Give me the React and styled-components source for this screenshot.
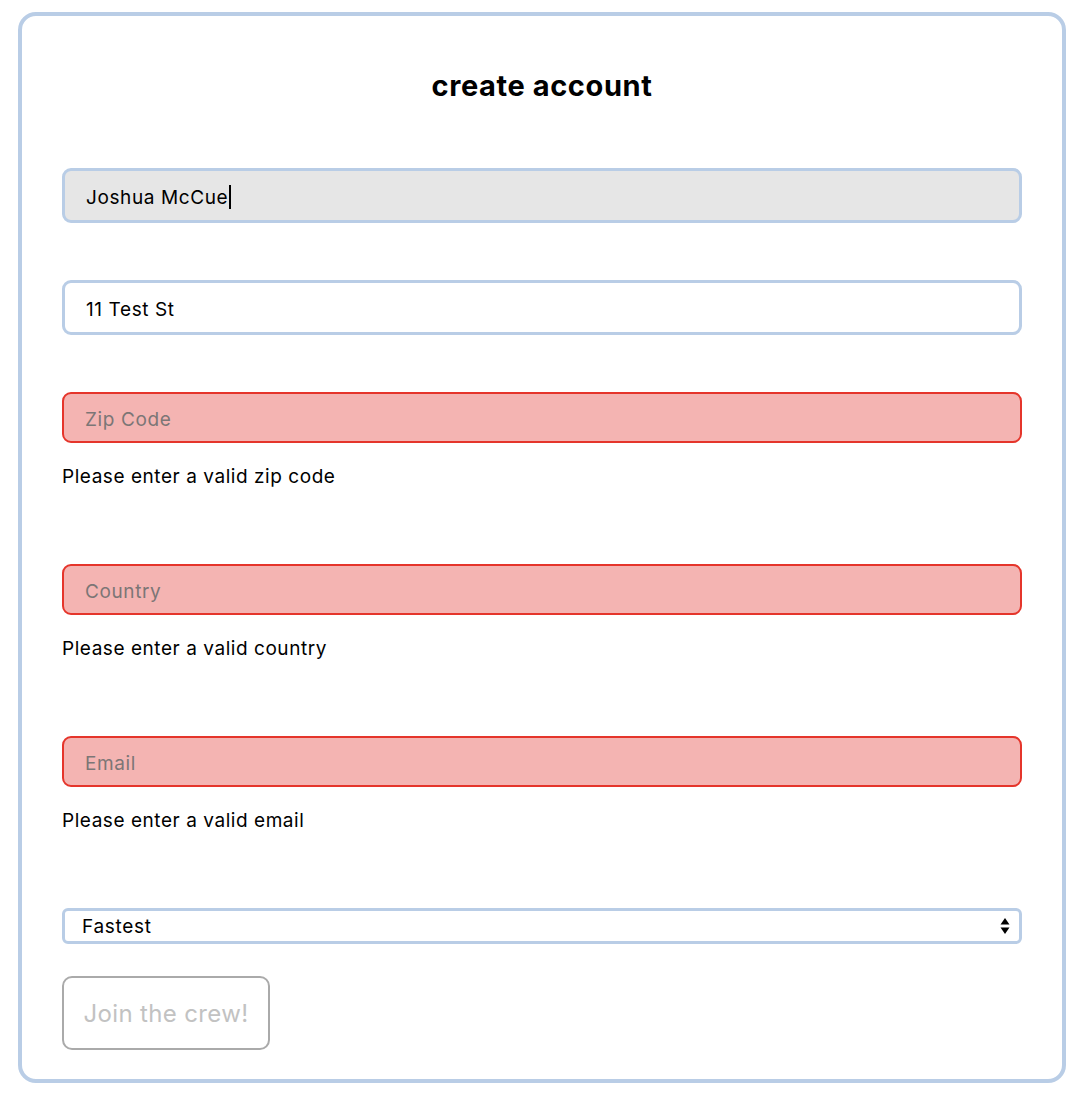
import React from "react";
import styled, { createGlobalStyle } from "styled-components";

const Global = createGlobalStyle`
  html, body { margin: 0; padding: 0; background: #fff; }
  body { font-family: Inter, "Noto Sans", "Liberation Sans", sans-serif; color: #000; }
  * { box-sizing: border-box; }
`;

const Card = styled.form`
  margin: 12px 22px 17px 18px;
  border: 4px solid #b9cde6;
  border-radius: 18px;
  padding: 53px 40px 29px;
  display: flex;
  flex-direction: column;
`;

const Title = styled.h1`
  margin: 0 0 65px;
  font-size: 29px;
  line-height: 34px;
  font-weight: 700;
  text-align: center;
  letter-spacing: 0.6px;
`;

const Field = styled.div`
  display: flex;
  flex-direction: column;
  margin-bottom: ${(p) => (p.$error ? "76px" : "57px")};
`;

const boxBase = `
  width: 100%;
  font-family: Inter, "Noto Sans", "Liberation Sans", sans-serif;
  font-size: 19px;
  letter-spacing: 0.6px;
  outline: none;
  display: flex;
  align-items: center;
`;

const FocusedBox = styled.div`
  ${boxBase}
  height: 55px;
  border: 3px solid #b9cde6;
  border-radius: 9px;
  background: #e6e6e6;
  padding: 3px 21px 0;
  color: #000;
`;

const Caret = styled.span`
  display: inline-block;
  width: 2px;
  height: 24px;
  background: #000;
  margin-left: 1px;
`;

const TextInput = styled.input`
  ${boxBase}
  height: ${(p) => (p.$error ? "51px" : "55px")};
  border: ${(p) => (p.$error ? "2px solid #e5352b" : "3px solid #b9cde6")};
  border-radius: 9px;
  background: ${(p) => (p.$error ? "#f4b4b2" : "#fff")};
  padding: 3px 21px 0 ${(p) => (p.$error ? "21px" : "21px")};
  color: #000;
  &::placeholder { color: #7c7676; opacity: 1; }
`;

const ErrorText = styled.div`
  margin-top: 23px;
  font-size: 19px;
  line-height: 22px;
  letter-spacing: 0.55px;
  color: #000;
`;

const SelectWrap = styled.div`
  position: relative;
  margin-bottom: 32px;
`;

const Select = styled.select`
  appearance: none;
  -webkit-appearance: none;
  width: 100%;
  height: 36px;
  border: 3px solid #b9cde6;
  border-radius: 6px;
  background: #fff;
  padding: 1px 17px 0;
  font-family: Inter, "Noto Sans", "Liberation Sans", sans-serif;
  font-size: 19px;
  letter-spacing: 0.7px;
  color: #000;
  outline: none;
`;

const Arrows = styled.svg`
  position: absolute;
  right: 12px;
  top: 9px;
  pointer-events: none;
`;

const Button = styled.button`
  align-self: flex-start;
  width: 208px;
  height: 74px;
  border: 2px solid #aaaaaa;
  border-radius: 10px;
  background: #fff;
  color: #c2c2c2;
  font-family: Inter, "Noto Sans", "Liberation Sans", sans-serif;
  font-size: 24px;
  letter-spacing: 0.35px;
  padding: 0;
`;

export default function App() {
  return (
    <>
      <Global />
      <Card onSubmit={(e) => e.preventDefault()}>
        <Title>create account</Title>
        <Field>
          <FocusedBox role="textbox">
            Joshua McCue<Caret />
          </FocusedBox>
        </Field>
        <Field>
          <TextInput defaultValue="11 Test St" />
        </Field>
        <Field $error>
          <TextInput $error placeholder="Zip Code" />
          <ErrorText>Please enter a valid zip code</ErrorText>
        </Field>
        <Field $error>
          <TextInput $error placeholder="Country" />
          <ErrorText>Please enter a valid country</ErrorText>
        </Field>
        <Field $error>
          <TextInput $error placeholder="Email" />
          <ErrorText>Please enter a valid email</ErrorText>
        </Field>
        <SelectWrap>
          <Select defaultValue="Fastest">
            <option>Fastest</option>
            <option>Standard</option>
          </Select>
          <Arrows width="10" height="18" viewBox="0 0 10 18">
            <path d="M5 1 L9.5 7.5 H0.5 Z" fill="#000" />
            <path d="M5 17 L9.5 10.5 H0.5 Z" fill="#000" />
          </Arrows>
        </SelectWrap>
        <Button type="submit" disabled>Join the crew!</Button>
      </Card>
    </>
  );
}
